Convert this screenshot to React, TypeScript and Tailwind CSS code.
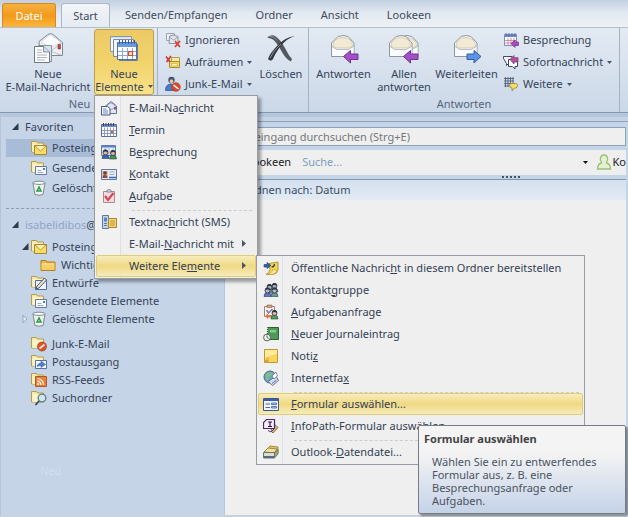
import React from "react";
import type { ReactNode } from "react";

type BoxProps = { size?: "sm" | "lg"; children: ReactNode };

function Svg({ size = "sm", children }: BoxProps) {
  return size === "sm" ? (
    <svg viewBox="0 0 16 16" className="size-4 shrink-0" fill="none" aria-hidden="true">
      {children}
    </svg>
  ) : (
    <svg viewBox="0 0 32 32" className="size-8 shrink-0" fill="none" aria-hidden="true">
      {children}
    </svg>
  );
}

/* ---------- large ribbon icons ---------- */

function NewMailIcon() {
  return (
    <Svg size="lg">
      <path d="M7 9.500 16 2.500q2.500-2 5 0l9.500 8v13H8z" fill="#eef1f5" stroke="#7c8795" />
      <path d="M9 10 16.500 4q2-1.500 4 0l8.500 6.500-8 4h-4z" fill="#fdfdfd" stroke="#c3cad3" strokeWidth=".6" />
      <path d="M30 11 19 19M18 19l11 4" stroke="#aab4c0" strokeWidth=".8" />
      <path d="M26 12.500h2.500V17H26z" fill="#c9443a" stroke="#7e3a3a" strokeWidth=".6" />
      <path d="M6.500 13.500h13v16h-13z" fill="#dce3ec" stroke="#8994a2" />
      <path d="M2.500 14.500h9l6 5.500v10.500h-15z" fill="#fff" stroke="#6d7886" />
      <path d="M11.500 14.500v5.500h6" fill="#d6dee8" stroke="#6d7886" strokeWidth=".8" />
      <path d="M5 18h5M5 20.500h5M5 23h10M5 25.500h10M5 28h8" stroke="#a3aebc" strokeWidth=".9" />
    </Svg>
  );
}

function NewItemsIcon() {
  return (
    <Svg size="lg">
      <path d="M2.500 4.500h21v15h-21z" fill="#fbfcfe" stroke="#8995a8" />
      <path d="M3 5h20v1.500H3z" fill="#d3deee" />
      <path d="M5.500 7.500h20v17h-20z" fill="#f6f8fb" stroke="#7c8aa0" />
      <path d="M9.500 10.500h19v17h-19z" fill="#fff" stroke="#4a70b0" />
      <path d="M10 11h18v4H10z" fill="#6a9be0" />
      <path d="M10 19.500h18M10 23.500h18M14.500 15v12M19.500 15v12M24.500 15v12" stroke="#8eaad6" />
      <path d="M11.500 8v4M14.500 8v4M17.500 8v4M20.500 8v4M23.500 8v4M26.500 8v4" stroke="#39609f" />
      <path d="M10 15.500h18" stroke="#fff" />
      <path d="M20.500 19.500h4v4h-4z" fill="#fce3d4" stroke="#d24b2d" strokeWidth="1.200" />
      <path d="M11 28.500h18.500V12" stroke="#6c7d99" />
    </Svg>
  );
}

function DeleteIcon() {
  return (
    <Svg size="lg">
      <path d="M2 5.500q5-3.500 8-1.500 5 3 10 12 4 8 7 11l-1 2.500q-5-2-9-9.500-6-11-10-13-2-1-5-1.500z" fill="#54585e" />
      <path d="M30 4q-8 2-15 11-5 7-7 12-2 3-5 0 2-6 9-13 8-9 18-10z" fill="#35393f" />
      <path d="M5 26q3-7 11-14M5 4.500q4-1 7 4" stroke="#8d9299" />
    </Svg>
  );
}

function Envelope({ x = 0 }: { x?: number }) {
  return (
    <g transform={`translate(${x} 0)`}>
      <path d="M3.500 11 10 4.500q5-2 10 0l6 6.500v13.500h-22.500z" fill="#f5f6f8" stroke="#8d97a3" />
      <path d="M5 14q0-8 9.500-8.500Q24.500 6 24.500 14L21 16H8z" fill="#f2ead4" stroke="#cdbf9b" strokeWidth=".7" />
      <path d="M4 14.500 8.500 17h12l5-2.500V24H4z" fill="#fafbfc" />
      <path d="m4 14.500 5 3h11l5.500-3" stroke="#a7afb9" strokeWidth=".8" />
    </g>
  );
}

function ArrowLeft() {
  return <path d="m15.500 24.500 7-6v3.500h7.500v5.500h-7.500V31z" fill="#a44fca" stroke="#70318f" />;
}

function ReplyIcon() {
  return (
    <Svg size="lg">
      <Envelope />
      <ArrowLeft />
    </Svg>
  );
}

function ReplyAllIcon() {
  return (
    <Svg size="lg">
      <Envelope x={4} />
      <Envelope x={-2} />
      <ArrowLeft />
    </Svg>
  );
}

function ForwardIcon() {
  return (
    <Svg size="lg">
      <Envelope />
      <path d="m30 24.500-7-6v3.500h-7v5.500h7V31z" fill="#5c94df" stroke="#2f5ea8" />
    </Svg>
  );
}

/* ---------- small ribbon icons ---------- */

function IgnoreIcon() {
  return (
    <Svg>
      <path d="M1.500 1.500h8v7h-8z" fill="#f1f3f6" stroke="#9aa4b1" />
      <path d="M4.500 4 8 3l5 1.500v7h-9z" fill="#e2e6ec" stroke="#8b95a3" />
      <path d="m4.500 5 4 3 4.500-3" stroke="#8b95a3" strokeWidth=".8" />
      <path d="m10 9 5 6M15 9l-5 6" stroke="#d8402f" strokeWidth="1.800" />
    </Svg>
  );
}

function CleanUpIcon() {
  return (
    <Svg>
      <path d="M6.500 3.500h8v7h-8z" fill="#fbe9a9" stroke="#b99a3e" />
      <path d="M4.500 7.500h10v6h-10z" fill="#f8d867" stroke="#b08a26" />
      <path d="M6.500 9.500h6v2.500h-6z" fill="#fdf0b4" stroke="#c7a341" strokeWidth=".6" />
      <path d="M1 2.500 5 8M6 2 1.500 8" stroke="#cf3a2a" strokeWidth="1.600" />
    </Svg>
  );
}

function JunkIcon() {
  return (
    <Svg>
      <circle cx="6.500" cy="4" r="3.200" fill="#46516a" />
      <path d="M4.500 5.500q2 3 4 0l-1-2h-2z" fill="#e9c9a5" />
      <path d="M.5 14.500q0-6 5-6.500 5 0 6 4v2.500z" fill="#4c79c7" stroke="#2c4e91" strokeWidth=".7" />
      <circle cx="11" cy="11" r="4.300" fill="#d9482c" stroke="#a93219" strokeWidth=".6" />
      <path d="m8.500 9 5 4" stroke="#fff" strokeWidth="1.600" />
    </Svg>
  );
}

function MeetingReplyIcon() {
  return (
    <Svg>
      <path d="M1.500 2.500h12v11h-12z" fill="#fff" stroke="#7d8fba" />
      <path d="M2 3h11v2H2z" fill="#6c88c6" />
      <path d="M2 8.500h11M2 11h11M5 6v7M8 6v7M11 6v7" stroke="#d0879a" strokeWidth=".9" />
      <path d="M3 1v3M6 1v3M9 1v3M12 1v3" stroke="#4e68a5" />
      <path d="m8 11.500 4-3.500v2h3.500v3.500H12v2z" fill="#a949c4" stroke="#6d2f8a" strokeWidth=".7" />
    </Svg>
  );
}

function ImIcon() {
  return (
    <Svg>
      <path d="M3.500 2.500H9v7H5.500l-2 2v-2L.5 4.500v-2z" fill="#f6f7fb" stroke="#3d4668" />
      <path d="M5.500 5.500h9v7H12V15l-2.500-2.500h-4z" fill="#fff" stroke="#3d4668" />
      <path d="m7 5.500 4-4v2.200h4V8h-4v2z" fill="#b0529e" stroke="#7b2f72" strokeWidth=".7" />
    </Svg>
  );
}

function MoreRespondIcon() {
  return (
    <Svg>
      <path d="M1 2.500h10M1 5h10M1 7.500h10M1 10h7M2.500 1v10M5 1v10M7.500 1v10M10 1v7" stroke="#51607f" strokeWidth=".9" />
      <path d="M6.500 9q0-1.500 2-1.500h4q2 0 2 2t-2 2.500h-1L9 15v-3q-2.500 0-2.500-3z" fill="#f6dd5f" stroke="#94823b" strokeWidth=".8" />
    </Svg>
  );
}

/* ---------- menu icons ---------- */

function MailIcon() {
  return (
    <Svg>
      <path d="M4.500 6 10 1.500 15.500 6v7.500h-11z" fill="#dfe5f1" stroke="#65739a" />
      <path d="M5 6.500 10 10l5-3.500M6 6q4-6 8 0" stroke="#8d9abf" strokeWidth=".8" />
      <path d="M13 7h2v2.500h-2z" fill="#a94878" />
      <path d="M.5 6.500h6l2.500 2v6.500H.5z" fill="#f8faff" stroke="#47557d" />
      <path d="M2 9h3.500M2 11h5M2 13h5" stroke="#5977b3" strokeWidth=".9" />
    </Svg>
  );
}

function CalendarIcon() {
  return (
    <Svg>
      <path d="M.5 2.500h15v12H.5z" fill="#fff" stroke="#5a6f9e" />
      <path d="M1 3h14v2H1z" fill="#6e8fd0" />
      <path d="M2.500 1v3M5 1v3M7.500 1v3M10 1v3M12.500 1v3" stroke="#34436a" />
      <path d="M1 8.500h14M1 11.500h14M3.500 5.500V14M6.500 5.500V14M9.500 5.500V14M12.500 5.500V14" stroke="#8196bf" strokeWidth=".9" />
      <path d="M10 9h2.500v2.500H10z" fill="#d9614a" />
    </Svg>
  );
}

function Person({ x, y, c, face = "#dcb896" }: { x: number; y: number; c: string; face?: string }) {
  return (
    <g transform={`translate(${x} ${y})`}>
      <path d="M.5 9q0-4 3.500-4t3.500 4z" fill={c} stroke="#2c3c5c" strokeWidth=".6" />
      <circle cx="4" cy="3" r="2.500" fill={face} stroke="#2d3547" strokeWidth=".8" />
      <path d="M1.500 3q0-3 2.500-3t2.500 3Q4 1 1.500 3z" fill="#2f3646" />
    </g>
  );
}

function MeetingIcon() {
  return (
    <Svg>
      <path d="M.5 1.500h14v10H.5z" fill="#e6edf9" stroke="#607ab0" />
      <path d="M1 2h13v1.500H1z" fill="#5d80c4" />
      <path d="M4 4v7M8 4v7M12 4v7" stroke="#9bb0d6" strokeWidth=".8" />
      <Person x={0.5} y={5.5} c="#3868b8" />
      <Person x={8} y={6} c="#3f9947" />
    </Svg>
  );
}

function ContactIcon() {
  return (
    <Svg>
      <path d="M.5 3.500h15v10H.5z" fill="#e8eef9" stroke="#5e77a8" />
      <path d="M1.500 5h5v7h-5z" fill="#cf9e80" />
      <circle cx="4" cy="7" r="1.800" fill="#704331" />
      <path d="M1.500 12q0-3 2.500-3t2.500 3z" fill="#8f4a40" />
      <path d="M8.500 6h5M8.500 8.500h5" stroke="#9eacc8" />
      <path d="M8 11.500h7" stroke="#3f66b1" strokeWidth="1.500" />
    </Svg>
  );
}

function TaskIcon() {
  return (
    <Svg>
      <path d="M2.500 3.500h11v11h-11z" fill="#f4dce0" stroke="#a88a94" />
      <path d="M5.500 4q0-2.500 2.500-2.500T10.500 4z" fill="#d8dbe3" stroke="#6d7280" strokeWidth=".8" />
      <path d="m4 8 3 4 5.500-7" stroke="#d6485a" strokeWidth="2.200" />
    </Svg>
  );
}

function SmsIcon() {
  return (
    <Svg>
      <path d="M1.500 1.500h6v13h-6z" fill="#c7d6ea" stroke="#61779a" />
      <path d="M3 3.500h3v4H3z" fill="#4e86c8" />
      <path d="M3 9.500h3M3 11.500h3" stroke="#61779a" />
      <path d="M7.500 4.500h8v9h-8z" fill="#f7d66b" stroke="#a98531" />
      <path d="M9 7h5M9 9h5M9 11h5" stroke="#a98531" strokeWidth=".8" />
    </Svg>
  );
}

function PostIcon() {
  return (
    <Svg>
      <path d="M6 3.500 15 2v8q-1 4-5 4.500H3q3-1 4-5z" fill="#f5d54c" stroke="#a5842a" strokeWidth=".8" />
      <path d="M3 14.500q6-.5 7-5.500l4 1.500q-1.500 4-5 4z" fill="#fbeaa0" stroke="#b9952f" strokeWidth=".6" />
      <path d="M1 4.500h3V2.500l4 3-4 3V7H1z" fill="#2f65a7" stroke="#1c3d6c" strokeWidth=".6" />
      <path d="M11.500 4q0 3-3 3" stroke="#22364e" strokeWidth="1.200" />
    </Svg>
  );
}

function ContactGroupIcon() {
  return (
    <Svg>
      <Person x={7.5} y={1} c="#6fa378" face="#a9b3bd" />
      <Person x={2.5} y={2} c="#7f8aad" face="#a9b3bd" />
      <Person x={0.5} y={5.5} c="#6272c6" face="#b9b7bf" />
      <Person x={7.5} y={5.5} c="#6b9a86" face="#b9b7bf" />
    </Svg>
  );
}

function TaskRequestIcon() {
  return (
    <Svg>
      <path d="M1.500 2.500h10v10h-10z" fill="#fbf2f0" stroke="#a98172" />
      <path d="M4 1h5v2.500H4z" fill="#d8a06c" stroke="#7f6650" strokeWidth=".6" />
      <path d="m3.500 6 2 3 4-4" stroke="#7b71b9" strokeWidth="1.400" />
      <path d="m2 12 3-2.500V11h4v2.500H5V15z" fill="#e07a3f" />
      <Person x={7.5} y={6} c="#4ba257" />
    </Svg>
  );
}

function JournalIcon() {
  return (
    <Svg>
      <path d="M4.500 1.500h11v12h-11z" fill="#4d9a56" stroke="#2b6136" />
      <path d="M7 4h6v2.500H7z" fill="#8dc692" />
      <path d="M4 2v11" stroke="#dbe6dc" strokeWidth="1.800" strokeDasharray="1 1" />
      <circle cx="4" cy="11.500" r="3.400" fill="#f2f5f3" stroke="#545f5a" />
      <path d="M4 9.500v2l1.500 1" stroke="#3b4540" strokeWidth=".9" />
    </Svg>
  );
}

function NoteIcon() {
  return (
    <Svg>
      <path d="M1.500 1.500h13v13h-13z" fill="#f8d55b" stroke="#c09932" />
      <path d="M2 2h12v4q-7 1-12 4z" fill="#fdeca0" />
      <path d="m2 14 5-1-3-4z" fill="#e08a2c" />
      <path d="M3 10.500 7 13" stroke="#ffd98b" />
    </Svg>
  );
}

function FaxIcon() {
  return (
    <Svg>
      <circle cx="7" cy="7" r="6" fill="#6fa7bd" stroke="#436d88" />
      <path d="M3 4q3-3 6-1L8 6 5 7l1 4-3-2z" fill="#80bf8b" />
      <path d="M5 11.500 13 6l2.500 4.500-6 5z" fill="#d7deee" stroke="#53658e" strokeWidth=".9" />
      <path d="m9 6 4-4 1.500 4L11 9z" fill="#fff" stroke="#53658e" strokeWidth=".7" />
      <path d="m9 13.500 4.500-3.500" stroke="#4e6fbe" />
    </Svg>
  );
}

function FormIcon() {
  return (
    <Svg>
      <path d="M.5 2.500h15v12H.5z" fill="#eef3fc" stroke="#3d5684" />
      <path d="M1 3h14v2H1z" fill="#3b5fa6" />
      <path d="M2.500 8H7M2.500 11.500H7" stroke="#52678f" strokeWidth="1.200" />
      <path d="M8.500 7h5v1.500h-5zM8.500 10.500h5V12h-5z" fill="#bcd2f4" stroke="#3b5fa6" strokeWidth=".8" />
    </Svg>
  );
}

function InfoPathIcon() {
  return (
    <Svg>
      <path d="m10 5 5 4.500-5 5.500-2-2z" fill="#e1b873" stroke="#69503a" strokeWidth=".8" />
      <path d="M3.500 1.500h8v9h-11v-6z" fill="#f5effb" stroke="#4b2370" strokeWidth="1.200" />
      <path d="M5 4h4M5 8.500h4M7 4v4.500" stroke="#2f1450" strokeWidth="1.200" />
      <path d="m5 12.500 3 1.500 4-4" stroke="#51407c" />
    </Svg>
  );
}

function DataFileIcon() {
  return (
    <Svg>
      <path d="M3 6 7 2l8 1v6l-4 2z" fill="#e4c765" stroke="#8f7932" strokeWidth=".8" />
      <path d="m1 8 4-4 9 1-3 4z" fill="#f5e29c" stroke="#8f7932" strokeWidth=".8" />
      <path d="M.5 8.500h11V14H.5z" fill="#d8dfcf" stroke="#66736c" />
      <path d="m11.500 8.500 3.500-3V10l-3.500 4z" fill="#a4a070" stroke="#66736c" strokeWidth=".8" />
      <path d="M1 12h10v2H1z" fill="#596c7c" />
    </Svg>
  );
}

/* ---------- folder tree icons ---------- */

function FolderBase() {
  return (
    <>
      <path d="M.5 1.500h5l1 1.500h6v9H.5z" fill="#f8e9a6" stroke="#b79d4b" />
      <path d="M1.500 4h10v8h-10z" fill="#fbf2c6" />
    </>
  );
}

function InboxIcon() {
  return (
    <Svg>
      <FolderBase />
      <path d="M3.500 5.500h12v9h-12z" fill="#f9dd66" stroke="#a9862c" />
      <path d="m4 6 5.500 5L15 6" fill="#fdf0ab" stroke="#b08f36" strokeWidth=".9" />
    </Svg>
  );
}

function SentIcon() {
  return (
    <Svg>
      <FolderBase />
      <path d="M4.500 6.500h11v8h-11z" fill="#fbfcff" stroke="#6279a5" />
      <path d="M12 8h2v2h-2z" fill="#4f73bf" />
      <path d="M6.500 10.500h4M6.500 12.500h6" stroke="#8aa0c6" strokeWidth=".9" />
    </Svg>
  );
}

function TrashIcon() {
  return (
    <Svg>
      <path d="m2 3 2 11.500q4 1.500 8 0L14 3z" fill="#eff4f2" stroke="#7b8a8c" />
      <ellipse cx="8" cy="2.800" rx="6" ry="1.600" fill="#fff" stroke="#7b8a8c" />
      <path d="m8 7-2 4h4z" stroke="#2f9a45" strokeWidth="1.500" />
    </Svg>
  );
}

function FolderIcon() {
  return (
    <Svg>
      <path d="M1 3.500h5l1 1.500h8v8.500H1z" fill="#eeb53e" stroke="#b07f1f" />
      <path d="M1.500 6.500h13v6.500h-13z" fill="#f8ce62" />
      <path d="M2 7h12" stroke="#fdeaa8" />
    </Svg>
  );
}

function DraftsIcon() {
  return (
    <Svg>
      <FolderBase />
      <path d="M4.500 5.500h11v9h-11z" fill="#eef4ff" stroke="#4e6da8" />
      <path d="m5 14 1-3 7.500-8 2 2L8 13z" fill="#ece4c6" stroke="#3d4a66" strokeWidth=".9" />
    </Svg>
  );
}

function JunkFolderIcon() {
  return (
    <Svg>
      <FolderBase />
      <circle cx="11" cy="10.500" r="4.500" fill="#d9532c" stroke="#a63a19" strokeWidth=".7" />
      <path d="m8.500 12.500 5-4" stroke="#f8dfd2" strokeWidth="1.800" />
    </Svg>
  );
}

function OutboxIcon() {
  return (
    <Svg>
      <FolderBase />
      <path d="M4.500 6.500h11v8h-11z" fill="#f3f7ff" stroke="#5772a5" />
      <path d="M6 12.500q1-3.500 4-3.500V7l4.500 3.500-4.500 3v-2q-2 0-4 1z" fill="#4f7fd0" stroke="#32579b" strokeWidth=".5" />
    </Svg>
  );
}

function RssIcon() {
  return (
    <Svg>
      <FolderBase />
      <path d="M4.500 4.500h11v10h-11z" fill="#ec7f37" stroke="#b85619" />
      <circle cx="7.200" cy="12" r="1.100" fill="#fff" />
      <path d="M6.200 9.200a3.700 3.700 0 0 1 3.700 3.700M6.200 6.500a6.400 6.400 0 0 1 6.400 6.400" stroke="#fff" strokeWidth="1.200" />
    </Svg>
  );
}

function SearchFolderIcon() {
  return (
    <Svg>
      <FolderBase />
      <path d="m8.500 10.500-4 4.500" stroke="#39444f" strokeWidth="1.800" />
      <circle cx="11" cy="8" r="3.800" fill="#cfe6ee" stroke="#5c7f86" strokeWidth="1.300" />
    </Svg>
  );
}

/* ---------- small parts ---------- */

function Caret() {
  return (
    <svg viewBox="0 0 5 3" className="h-[3px] w-[5px] shrink-0" aria-hidden="true">
      <path d="M0 0h5L2.500 3z" fill="#47566b" />
    </svg>
  );
}

/** Text whose access key, the letter after "_", is underlined. */
function KeyLabel({ text }: { text: string }) {
  const at = text.indexOf("_");
  if (at < 0) return <span>{text}</span>;
  return (
    <span>
      {text.slice(0, at)}
      <span className="underline underline-offset-1">{text[at + 1]}</span>
      {text.slice(at + 2)}
    </span>
  );
}

function BigButton({ icon, lines, className = "pt-[3px]" }: { icon: ReactNode; lines: ReactNode[]; className?: string }) {
  return (
    <button className={`flex h-[66px] shrink-0 flex-col items-center rounded-[3px] leading-[13px] whitespace-nowrap ${className}`}>
      {icon}
      {lines.map((line, i) => (
        <span key={i} className={i === 0 ? "mt-[3px]" : "flex items-center gap-1"}>
          {line}
        </span>
      ))}
    </button>
  );
}

function SmallButton({ icon, label, caret }: { icon: ReactNode; label: string; caret?: boolean }) {
  return (
    <button className="flex h-[22px] items-center gap-1 whitespace-nowrap">
      {icon}
      {label}
      {caret && <Caret />}
    </button>
  );
}

function Group({ title, className, children }: { title: string; className: string; children: ReactNode }) {
  return (
    <section aria-label={title} className={`flex shrink-0 flex-col border-r border-[#a3b2c5] pt-px ${className}`}>
      <div className="flex">{children}</div>
      <div className="text-center leading-[17px] text-[#56657c]">{title}</div>
    </section>
  );
}

function Separator() {
  return <div className="mr-1 ml-9 h-1 border-b border-dashed border-[#cdcdc6]" role="separator" />;
}

type ItemProps = { label: string; icon?: ReactNode; active?: boolean; arrow?: boolean; children?: ReactNode };

function MenuItem({ label, icon, active, arrow, children }: ItemProps) {
  return (
    <div className="relative">
      <button
        role="menuitem"
        className={`flex h-[22px] w-full items-center rounded-[2px] border pr-[9px] pb-px pl-1 text-left whitespace-nowrap ${
          active
            ? "border-[#e0cb76] bg-linear-to-b from-[#f6edbd] via-[#f0d983] to-[#f5ecbc]"
            : "border-transparent"
        }`}
      >
        <span className="mr-3 size-4 shrink-0">{icon}</span>
        <span className="flex-1">
          <KeyLabel text={label} />
        </span>
        {arrow && (
          <svg viewBox="0 0 4 7" className="h-[7px] w-1" aria-hidden="true">
            <path d="M0 0v7l4-3.500z" fill="#4a5568" />
          </svg>
        )}
      </button>
      {children}
    </div>
  );
}

function Menu({ className, children }: { className: string; children: ReactNode }) {
  return (
    <div
      role="menu"
      className={`absolute border border-[#979ba2] bg-[linear-gradient(90deg,#f1f1f1_25px,#dcdfe3_25px,#dcdfe3_26px,#efefef_26px)] p-px text-[#333f55] ${className}`}
    >
      {children}
    </div>
  );
}

function Tooltip() {
  return (
    <div
      role="tooltip"
      className="absolute top-8 left-[160px] z-10 w-[208px] rounded-[2px] border border-[#777b82] bg-linear-to-b from-[#f4f4f5] from-30% to-[#c5d3e8] pt-[6px] pb-[6px] pl-[5px] leading-[13px] text-[#4b5360] shadow-[2px_2px_2px_rgba(0,0,0,0.4)]"
    >
      <strong className="block text-[#444]">Formular auswählen</strong>
      <p className="mx-2 mt-[10px]">
        Wählen Sie ein zu entwerfendes Formular aus, z. B. eine Besprechungsanfrage oder Aufgaben.
      </p>
    </div>
  );
}

function MoreItemsMenu() {
  return (
    <Menu className="top-0 left-[160px] w-[329px]">
      <MenuItem icon={<PostIcon />} label="Öffentliche Nachric_ht in diesem Ordner bereitstellen" />
      <MenuItem icon={<ContactGroupIcon />} label="Kontakt_gruppe" />
      <MenuItem icon={<TaskRequestIcon />} label="_Aufgabenanfrage" />
      <MenuItem icon={<JournalIcon />} label="_Neuer Journaleintrag" />
      <MenuItem icon={<NoteIcon />} label="Noti_z" />
      <MenuItem icon={<FaxIcon />} label="Internetfa_x" />
      <Separator />
      <MenuItem icon={<FormIcon />} label="_Formular auswählen..." active>
        <Tooltip />
      </MenuItem>
      <MenuItem icon={<InfoPathIcon />} label="_InfoPath-Formular auswählen..." />
      <Separator />
      <MenuItem icon={<DataFileIcon />} label="Outlook-_Datendatei..." />
    </Menu>
  );
}

function NewItemsMenu() {
  return (
    <Menu className="top-[66px] left-0 z-20 w-[164px] shadow-[3px_3px_3px_rgba(0,0,0,0.35)]">
      <MenuItem icon={<MailIcon />} label="E-Mail-Na_chricht" />
      <MenuItem icon={<CalendarIcon />} label="_Termin" />
      <MenuItem icon={<MeetingIcon />} label="B_esprechung" />
      <MenuItem icon={<ContactIcon />} label="_Kontakt" />
      <MenuItem icon={<TaskIcon />} label="_Aufgabe" />
      <Separator />
      <MenuItem icon={<SmsIcon />} label="Textnac_hricht (SMS)" />
      <MenuItem label="E-Mail-_Nachricht mit" arrow />
      <MenuItem label="Weitere Ele_mente" arrow active>
        <MoreItemsMenu />
      </MenuItem>
    </Menu>
  );
}

function Tabs() {
  return (
    <nav className="flex h-[27px] items-end bg-linear-to-b from-[#c3d0e0] via-[#e3eaf2] to-[#eef1f5] pl-[2px] text-[#3f4a5c]">
      <button className="mr-[5px] h-6 w-[54px] rounded-t-[3px] border border-b-0 border-[#d68a1c] bg-linear-to-b from-[#f5b040] via-[#f39a17] to-[#fbb53c] text-white">
        Datei
      </button>
      <button className="relative z-10 h-6 w-[49px] rounded-t-[3px] border border-b-0 border-[#a9b7c8] bg-linear-to-b from-[#f3f5f8] to-[#e4ebf3]">
        Start
      </button>
      <div className="flex h-6 items-center gap-7 pl-[15px]">
        <button>Senden/Empfangen</button>
        <button>Ordner</button>
        <button>Ansicht</button>
        <button>Lookeen</button>
      </div>
    </nav>
  );
}

function Ribbon() {
  return (
    <div className="flex h-[86px] border-t border-b border-t-[#b3bfcd] border-b-[#8497af] bg-linear-to-b from-[#e3eaf3] to-[#cbd8e8] pl-[2px]">
      <Group title="Neu" className="w-[156px]">
        <BigButton icon={<NewMailIcon />} lines={["Neue", "E-Mail-Nachricht"]} className="w-[92px] pt-[3px]" />
        <div className="relative">
          <BigButton
            icon={<NewItemsIcon />}
            lines={[
              "Neue",
              <>
                Elemente <Caret />
              </>,
            ]}
            className="w-[60px] border border-[#c09f45] bg-linear-to-b from-[#ecca66] via-[#f1d36a] to-[#f8e189] pt-[2px]"
          />
          <NewItemsMenu />
        </div>
      </Group>
      <Group title="Löschen" className="w-[151px]">
        <div className="w-[97px] pl-[7px]">
          <SmallButton icon={<IgnoreIcon />} label="Ignorieren" />
          <SmallButton icon={<CleanUpIcon />} label="Aufräumen" caret />
          <SmallButton icon={<JunkIcon />} label="Junk-E-Mail" caret />
        </div>
        <BigButton icon={<DeleteIcon />} lines={["Löschen"]} className="w-[52px] pt-[3px]" />
      </Group>
      <Group title="Antworten" className="w-[311px]">
        <BigButton icon={<ReplyIcon />} lines={["Antworten"]} className="w-[69px] pt-[3px]" />
        <BigButton icon={<ReplyAllIcon />} lines={["Allen", "antworten"]} className="w-[52px] pt-[3px]" />
        <BigButton icon={<ForwardIcon />} lines={["Weiterleiten"]} className="w-[73px] pt-[3px]" />
        <div>
          <SmallButton icon={<MeetingReplyIcon />} label="Besprechung" />
          <SmallButton icon={<ImIcon />} label="Sofortnachricht" caret />
          <SmallButton icon={<MoreRespondIcon />} label="Weitere" caret />
        </div>
      </Group>
    </div>
  );
}

function Expander({ open }: { open?: boolean }) {
  return (
    <svg viewBox="0 0 7 8" className="h-2 w-[7px] shrink-0" aria-hidden="true">
      {open ? <path d="M6.500 0v7H0z" fill="#2e3b4b" /> : <path d="M1 .5v7L5 4z" fill="#eef2f8" stroke="#8696ab" strokeWidth=".8" />}
    </svg>
  );
}

function Folder({ icon, label, state, className = "h-[18px] pl-4" }: { icon: ReactNode; label: string; state?: "open" | "closed"; className?: string }) {
  return (
    <button className={`flex w-full items-center whitespace-nowrap ${className}`}>
      <span className="w-[9px] shrink-0">{state && <Expander open={state === "open"} />}</span>
      {icon}
      <span className="ml-[5px]">{label}</span>
    </button>
  );
}

function FolderTree() {
  return (
    <nav className="w-[224px] shrink-0 border-l border-[#b5c4d6] bg-[#c5d4e6] pl-[5px] text-[#35435b]">
      <h2 className="flex h-5 items-center gap-[6px] pl-[6px] font-normal">
        <Expander open /> Favoriten
      </h2>
      <Folder icon={<InboxIcon />} label="Posteingang" className="mt-[2px] mb-px h-[18px] bg-[#a9bcd7] pl-4" />
      <Folder icon={<SentIcon />} label="Gesendete Elemente" className="h-5 pl-4" />
      <Folder icon={<TrashIcon />} label="Gelöschte Elemente" className="h-5 pl-4" />
      <div className="mr-2 h-[11px] border-b border-dashed border-[#8c9db4]" />
      <h2 className="mt-[7px] flex h-[18px] items-center gap-[6px] pl-[6px] font-normal">
        <Expander open />
        <span>
          <span className="text-[#8fa6c6]">isabelidibos</span>@
        </span>
      </h2>
      <div className="mt-1">
        <Folder icon={<InboxIcon />} label="Posteingang" state="open" />
        <Folder icon={<FolderIcon />} label="Wichtig" className="h-[18px] pl-[25px]" />
        <Folder icon={<DraftsIcon />} label="Entwürfe" />
        <Folder icon={<SentIcon />} label="Gesendete Elemente" />
        <Folder icon={<TrashIcon />} label="Gelöschte Elemente" state="closed" />
      </div>
      <div className="mt-[7px]">
        <Folder icon={<JunkFolderIcon />} label="Junk-E-Mail" />
        <Folder icon={<OutboxIcon />} label="Postausgang" />
        <Folder icon={<RssIcon />} label="RSS-Feeds" />
        <Folder icon={<SearchFolderIcon />} label="Suchordner" />
      </div>
      <div className="mt-14 pl-[34px] text-[#d3dfef]">Neu</div>
    </nav>
  );
}

function MessagePane() {
  return (
    <main className="flex min-w-0 flex-1 flex-col border-t border-l border-t-[#8fa2ba] border-l-[#b7c6d8] bg-[#c5d4e6] pt-[5px] pr-[2px]">
      <input
        aria-label="Posteingang durchsuchen"
        placeholder="Posteingang durchsuchen (Strg+E)"
        className="mb-1 h-[19px] border border-[#8e9fb8] bg-[#efefef] pb-px pl-[6px] placeholder:text-[#74777c]"
      />
      <div className="flex h-[25px] items-center bg-[#efefef] pb-px pl-[22px] whitespace-nowrap text-[#222]">
        <label htmlFor="lookeen">Lookeen</label>
        <input id="lookeen" placeholder="Suche..." className="ml-[11px] min-w-0 flex-1 placeholder:text-[#7d9dbf]" />
        <button aria-label="Suchverlauf" className="mr-2">
          <svg viewBox="0 0 5 3" className="h-[3px] w-[5px]">
            <path d="M0 0h5L2.500 3z" fill="#111" />
          </svg>
        </button>
        <svg viewBox="0 0 16 16" className="size-4 shrink-0" fill="#e4efd6" stroke="#9dc06f" strokeWidth="1.300" aria-hidden="true">
          <path d="M8 1a3.500 4 0 0 1 2.500 7v1q4 1 4 6h-13q0-5 4-6V8A3.500 4 0 0 1 8 1z" />
        </svg>
        <span className="pl-px">Ko</span>
      </div>
      <div className="flex h-1 items-center justify-center gap-[2px] pl-[170px]">
        {[0, 1, 2, 3, 4].map((n) => (
          <span key={n} className="size-[2px] bg-[#41546f]" />
        ))}
      </div>
      <button className="h-[21px] border-t border-[#8598b1] bg-linear-to-b from-[#d3e0ee] to-[#e3ebf4] pl-[17px] text-left text-[#3d4c63]">
        Ordnen nach: Datum
      </button>
      <div className="flex-1 bg-[#efefef]" />
    </main>
  );
}

export default function App() {
  return (
    <div className="flex h-screen flex-col overflow-hidden bg-[#c5d4e6] font-['Noto_Sans','Open_Sans',sans-serif] text-[11px] leading-4 text-[#36445a]">
      <Tabs />
      <Ribbon />
      <div className="h-1 shrink-0 bg-[#b6c7db]" />
      <div className="flex min-h-0 flex-1 border-b-2 border-[#c9d3df]">
        <FolderTree />
        <div className="flex min-w-0 flex-1 pt-1">
          <MessagePane />
        </div>
      </div>
    </div>
  );
}
